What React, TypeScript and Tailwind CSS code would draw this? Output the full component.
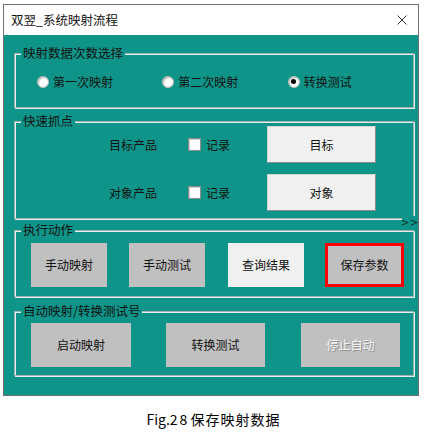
import React from 'react';

const groupBox =
  'relative border border-[#9fb2b0] shadow-[inset_1px_1px_0_#e4eeed,1px_1px_0_#e4eeed]';

const GroupLabel = ({ text }: { text: string }) => (
  <span className="absolute left-[6px] top-[-9px] bg-[#0e9488] px-[2px] text-[12.5px] leading-[16px] text-[#111]">
    {text}
  </span>
);

const Radio = ({ label, checked }: { label: string; checked?: boolean }) => (
  <div className="flex w-[136px] items-center gap-[4px]">
    <span className="flex h-[12px] w-[12px] items-center justify-center rounded-full border border-[#b9b9b9] bg-white shadow-[inset_1px_1px_1px_#bdbdbd]">
      {checked && <span className="h-[5px] w-[5px] rounded-full bg-black" />}
    </span>
    <span className="text-[12px] leading-[16px] text-[#111]">{label}</span>
  </div>
);

const CheckRow = ({ label, button }: { label: string; button: string }) => (
  <div className="flex h-[37px] items-center">
    <span className="w-[79px] text-[12px] leading-[16px] text-[#111]">{label}</span>
    <span className="h-[13px] w-[13px] border border-[#8d8d8d] bg-white shadow-[inset_1px_1px_0_#d0d0d0]" />
    <span className="ml-[5px] w-[61px] text-[12px] leading-[16px] text-[#111]">记录</span>
    <button className="h-[37px] w-[109px] border border-[#d4d4d4] border-b-[#8a8a8a] border-r-[#8a8a8a] bg-[#f0f0f0] text-[12px] text-[#111]">
      {button}
    </button>
  </div>
);

export default function App() {
  return (
    <div className="h-[436px] w-[424px] bg-white pl-[3px] pt-[4px] font-['Noto_Sans_CJK_SC',sans-serif]">
      <div className="w-[416px] border border-[#707070]">
        {/* title bar */}
        <div className="flex h-[30px] items-center justify-between bg-white pl-[7px] pr-[11px]">
          <span className="text-[12.5px] leading-[16px] text-[#111]">双翌_系统映射流程</span>
          <svg width="10" height="10" viewBox="0 0 10 10">
            <path d="M0.5 0.5L9.5 9.5M9.5 0.5L0.5 9.5" stroke="#333" strokeWidth="1" />
          </svg>
        </div>

        {/* body */}
        <div className="relative bg-[#0e9488] pb-[19px] pl-[10px] pr-[4px] pt-[18px]">
          <div className={`${groupBox} h-[55px]`}>
            <GroupLabel text="映射数据次数选择" />
            <div className="flex h-full items-center pl-[22px] pt-[2px]">
              <Radio label="第一次映射" />
              <Radio label="第二次映射" />
              <Radio label="转换测试" checked />
            </div>
          </div>

          <div className={`${groupBox} mt-[13px] h-[98px]`}>
            <GroupLabel text="快速抓点" />
            <div className="flex flex-col gap-[11px] pl-[94px] pt-[4px]">
              <CheckRow label="目标产品" button="目标" />
              <CheckRow label="对象产品" button="对象" />
            </div>
          </div>

          <div className={`${groupBox} mt-[11px] h-[67px]`}>
            <GroupLabel text="执行动作" />
            <div className="flex pl-[16px] pt-[12px] text-[12px] text-[#111]">
              <button className="h-[44px] w-[76px] bg-[#c0c0c0]">手动映射</button>
              <button className="ml-[22px] h-[44px] w-[76px] bg-[#c0c0c0]">手动测试</button>
              <button className="ml-[23px] h-[44px] w-[76px] bg-[#f0f0f0]">查询结果</button>
              <button className="ml-[21px] h-[44px] w-[79px] border-[3px] border-[#ff0000] bg-[#c0c0c0]">
                保存参数
              </button>
            </div>
          </div>

          <div className={`${groupBox} mt-[14px] h-[65px]`}>
            <GroupLabel text="自动映射/转换测试号" />
            <div className="flex pl-[16px] pt-[11px] text-[12px] text-[#111]">
              <button className="h-[44px] w-[100px] bg-[#c0c0c0]">启动映射</button>
              <button className="ml-[35px] h-[44px] w-[99px] bg-[#c0c0c0]">转换测试</button>
              <button className="ml-[36px] h-[44px] w-[99px] bg-[#c0c0c0] text-[#f7f7f7] [text-shadow:1px_1px_0_#8f8f8f]">
                停止自动
              </button>
            </div>
          </div>

          <span className="absolute left-[398px] top-[181px] flex h-[14px] w-[16px] items-center justify-center bg-[#0e9488] font-['DejaVu_Sans',sans-serif] text-[10px] leading-[10px] tracking-[1px] text-[#0b2f2c]">
            &gt;&gt;
          </span>
        </div>
      </div>

      <p className="mt-[13px] text-center text-[14px] leading-[20px] text-black">
        Fig.2<span className="ml-[2px]">8</span> <span className="tracking-[1px]">保存映射数据</span>
      </p>
    </div>
  );
}
